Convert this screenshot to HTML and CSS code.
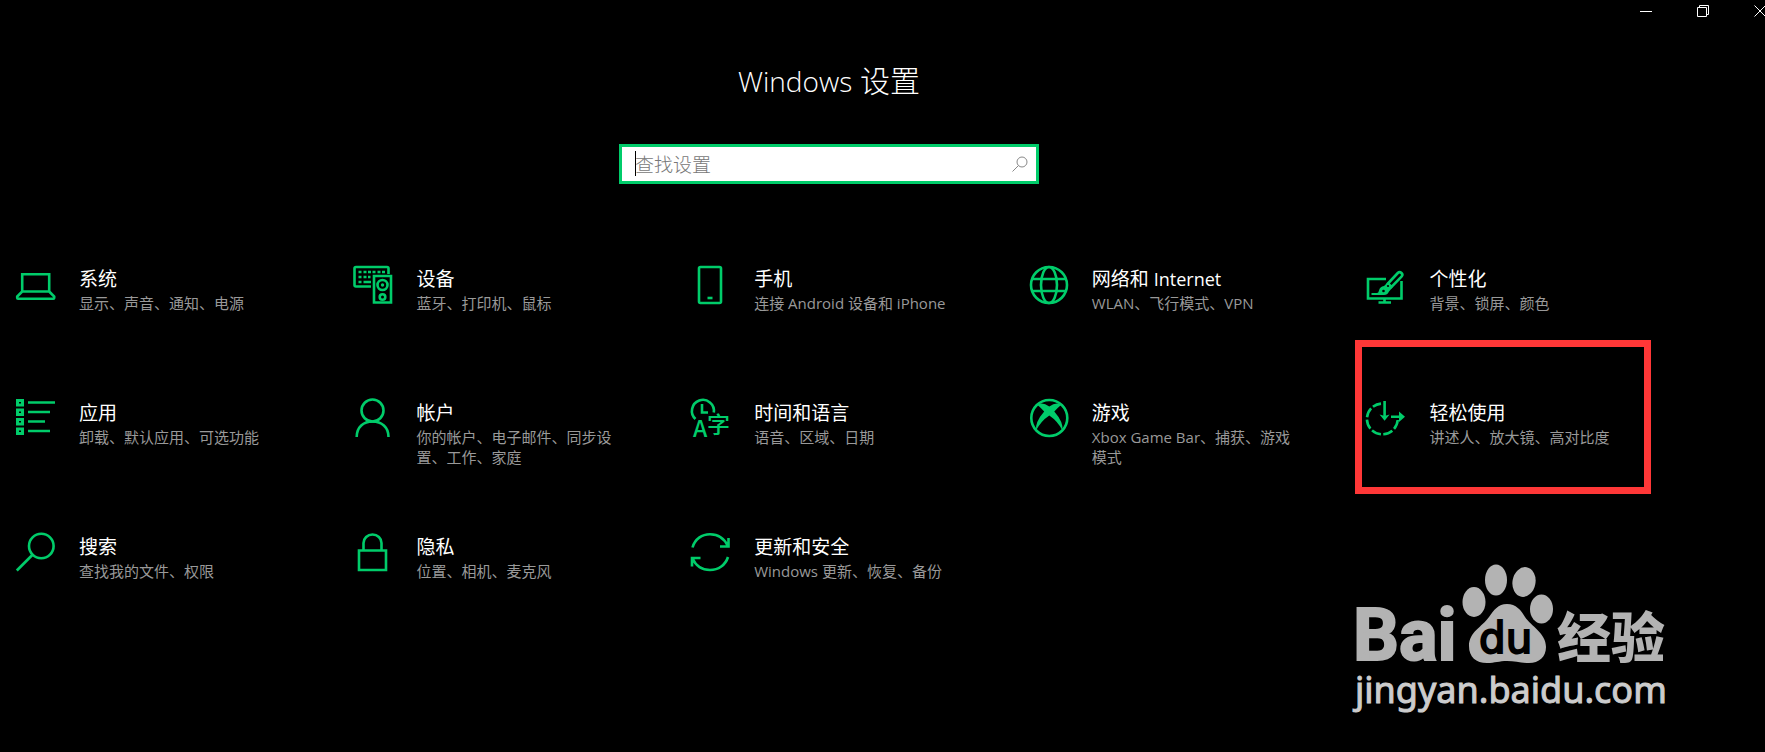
FILE: index.html
```html
<!DOCTYPE html>
<html lang="zh-CN">
<head>
<meta charset="utf-8">
<meta name="viewport" content="width=device-width, initial-scale=1">
<title>Windows 设置</title>
<link rel="stylesheet" href="styles.css">
</head>
<body>
<div class="titlebar">
  <div class="controls">
    <button type="button" class="control" aria-label="最小化"><svg viewBox="0 0 12 12"><path d="M0 6.500h12"/></svg></button>
    <button type="button" class="control" aria-label="还原"><svg viewBox="0 0 12 12"><path d="M.5 2.500h9v9h-9zM2.500 2.500v-2h9v9h-2"/></svg></button>
    <button type="button" class="control" aria-label="关闭"><svg viewBox="0 0 12 12"><path d="M.5.5l11 11M11.500.5l-11 11"/></svg></button>
  </div>
</div>

<main>
  <header class="top">
    <h1><span class="latin">Windows</span> 设置</h1>
    <form class="search" role="search">
      <input type="text" aria-label="查找设置" placeholder="查找设置">
      <span class="caret"></span>
      <button type="button" aria-label="搜索"><svg viewBox="0 0 16 16"><circle cx="10" cy="6" r="5"/><path d="M6.500 9.500L.5 15.500"/></svg></button>
    </form>
  </header>

  <ul class="grid">
    <li><a class="tile" href="#system">
      <svg class="icon" viewBox="0 0 40 40"><path d="M6.200 9.200h27v17.300h-27zM6.200 26.500L1.200 31.500v1.500q0 .8.8.8h35.400q.8 0 .8-.8v-1.500L33.200 26.500"/></svg>
      <span class="text"><span class="name">系统</span><span class="desc">显示、声音、通知、电源</span></span>
    </a></li>
    <li><a class="tile" href="#devices">
      <svg class="icon" viewBox="0 0 40 40"><path d="M17 21.500H2a1.500 1.500 0 0 1-1.500-1.500V3.500A1.500 1.500 0 0 1 2 2h31A1.500 1.500 0 0 1 34.500 3.500V9"/><path d="M20 11h17v26.500H20z"/><circle cx="28.500" cy="20" r="5"/><circle cx="28.500" cy="32" r="2.800"/><path d="M4.500 7h3M9.500 7h3M14 7h3M18.500 7h3M23.500 7h3M28 7h3M4.500 12h3M9.500 12h3M14 12h2.500M4.500 17h3M9.500 17h7.500"/><circle class="fill" cx="28.500" cy="20" r="1.700"/></svg>
      <span class="text"><span class="name">设备</span><span class="desc">蓝牙、打印机、鼠标</span></span>
    </a></li>
    <li><a class="tile" href="#phone">
      <svg class="icon" viewBox="0 0 40 40"><rect x="8" y="2" width="22" height="36" rx="1.500"/><path d="M16.500 33h5"/></svg>
      <span class="text"><span class="name">手机</span><span class="desc">连接 Android 设备和 iPhone</span></span>
    </a></li>
    <li><a class="tile" href="#network">
      <svg class="icon" viewBox="0 0 40 40"><circle cx="20" cy="20" r="18"/><ellipse cx="20" cy="20" rx="8" ry="18"/><path d="M3.500 14h33M3.500 26h33"/></svg>
      <span class="text"><span class="name">网络和 <span class="latin">Internet</span></span><span class="desc">WLAN、飞行模式、VPN</span></span>
    </a></li>
    <li><a class="tile" href="#personalization">
      <svg class="icon" viewBox="0 0 40 40"><path d="M20 14H2v19.500h33.500V16M18.500 34v4M12.500 37.500h12.500"/><path d="M22 18.500L31.800 8a2.500 2.500 0 0 1 3.700 3.600L25.500 22zM19 21.500l4 3.500"/><path class="fill" d="M21.500 17.500l5 5-3.500 4q-1.500 3.500-5 3.500H5.500v-2h5.500q1.500 0 2-2.500 .8-4 5-4.500z"/><circle class="hole" cx="17.500" cy="26" r="1.300"/><circle class="hole" cx="22" cy="21" r="1.100"/></svg>
      <span class="text"><span class="name">个性化</span><span class="desc">背景、锁屏、颜色</span></span>
    </a></li>
    <li><a class="tile" href="#apps">
      <svg class="icon" viewBox="0 0 40 40"><path class="thick" d="M1.500 1.500h5v4.500h-5zM1.500 11h5v4.500h-5zM1.500 20.500h5V25h-5zM1.500 30h5v4.500h-5z"/><path d="M12 3.500h27M12 13h22M12 22.500h17M12 32h22"/></svg>
      <span class="text"><span class="name">应用</span><span class="desc">卸载、默认应用、可选功能</span></span>
    </a></li>
    <li><a class="tile" href="#accounts">
      <svg class="icon" viewBox="0 0 40 40"><circle cx="18.500" cy="11.500" r="11"/><path d="M2.700 38C2.700 28 9.500 22.500 18.500 22.500S34.500 28 34.500 38"/></svg>
      <span class="text"><span class="name">帐户</span><span class="desc">你的帐户、电子邮件、同步设置、工作、家庭</span></span>
    </a></li>
    <li><a class="tile" href="#time">
      <svg class="icon" viewBox="0 0 40 40"><path d="M4.500 20A11 11 0 1 1 22.800 13.500M11 5v8.500h6"/><text class="glyph" x="2" y="38" font-size="23">A</text><text class="glyph" x="16" y="34" font-size="23">字</text></svg>
      <span class="text"><span class="name">时间和语言</span><span class="desc">语音、区域、日期</span></span>
    </a></li>
    <li><a class="tile" href="#gaming">
      <svg class="icon" viewBox="0 0 40 40"><circle cx="20.300" cy="19" r="18"/><path class="fill" d="M8.500 6Q13 2.500 20.300 7.500 27.500 2.500 32 6 29 8.500 25.300 12.500 34.500 23 33.500 31.500 28.500 22 20.300 16.500 12 22 7 31.500 6 23 15.200 12.500 11.500 8.500 8.500 6z"/></svg>
      <span class="text"><span class="name">游戏</span><span class="desc">Xbox Game Bar、捕获、游戏模式</span></span>
    </a></li>
    <li><a class="tile marked" href="#ease">
      <svg class="icon" viewBox="0 0 40 40"><path stroke-dasharray="9.800 2.400" d="M31.700 21A15.400 15.400 0 1 1 15 4.600"/><path d="M18.600 2v16M25 17.700h10"/><path class="fill" d="M13.600 15.500L18.600 17l5-1.500-5 6.300zM33 12.500l6 5.200-6 5.200z"/></svg>
      <span class="text"><span class="name">轻松使用</span><span class="desc">讲述人、放大镜、高对比度</span></span>
    </a></li>
    <li><a class="tile" href="#search">
      <svg class="icon" viewBox="0 0 40 40"><circle cx="25.300" cy="13" r="12.300"/><path d="M16.800 21.500L.8 37.500"/></svg>
      <span class="text"><span class="name">搜索</span><span class="desc">查找我的文件、权限</span></span>
    </a></li>
    <li><a class="tile" href="#privacy">
      <svg class="icon" viewBox="0 0 40 40"><path d="M5 17.500h27V37H5zM9.500 17.500V10a9 8.500 0 0 1 18 0v7.500"/></svg>
      <span class="text"><span class="name">隐私</span><span class="desc">位置、相机、麦克风</span></span>
    </a></li>
    <li><a class="tile" href="#update">
      <svg class="icon" viewBox="0 0 40 40"><path d="M1.500 14.500C4 6 11 1.200 19 1.200c8 0 14.500 4.500 18 12M37.500 5v8.500H29M37 24c-2.500 8-9.500 13-18 13-7.500 0-14-4-17.500-11.500M1 33.500V25h8.500"/></svg>
      <span class="text"><span class="name">更新和安全</span><span class="desc">Windows 更新、恢复、备份</span></span>
    </a></li>
  </ul>
</main>

<div class="watermark">
  <svg viewBox="0 0 320 150" role="img" aria-label="Baidu 经验">
    <text class="bai" x="1" y="97" font-size="72">Bai</text>
    <ellipse cx="122" cy="39" rx="11.500" ry="15"/>
    <ellipse cx="144" cy="17" rx="11" ry="15.500"/>
    <ellipse cx="172" cy="19" rx="11.500" ry="15" transform="rotate(10 172 19)"/>
    <ellipse cx="189.500" cy="46" rx="11.500" ry="14.500"/>
    <path d="M155 41c9 0 14 6 18 13 6 9 21 16 21 30 0 10-7 16-17 16-8 0-14-2-22-2s-12 2-20 2c-11 0-18-6-18-17 0-14 13-19 20-29 5-7 9-13 18-13z"/>
    <text class="du" x="127" y="90" font-size="42">du</text>
    <text class="cjk" x="205" y="95" font-size="54">经验</text>
    <text class="url" x="3" y="140" font-size="36">jingyan.baidu.com</text>
  </svg>
</div>
</body>
</html>
```
FILE: styles.css
```css
*,
*::after {
  box-sizing: border-box;
}

body {
  margin: 0;
  min-height: 100vh;
  position: relative;
  overflow-x: hidden;
  background: #000;
  color: #fff;
  font-family: "Open Sans", "Noto Sans CJK SC", sans-serif;
}

svg {
  display: block;
}

.titlebar {
  overflow: hidden;
}

.controls {
  display: flex;
  justify-content: flex-end;
  margin-right: -23px;
}

.control {
  width: 57px;
  height: 21px;
  padding: 0;
  border: 0;
  background: none;
  display: flex;
  align-items: center;
  justify-content: center;
}

.control svg {
  width: 12px;
  height: 12px;
  fill: none;
  stroke: #fff;
}

.top {
  display: flex;
  flex-direction: column;
  align-items: center;
  gap: 43px;
  padding: 40px 107px 0 0;
}

h1 {
  margin: 0;
  font-size: 30px;
  line-height: 40px;
  font-weight: 300;
}

h1 .latin {
  font-size: 28px;
}

.search {
  position: relative;
  display: flex;
  align-items: center;
  width: 420px;
  max-width: 100%;
  height: 40px;
  padding: 0 8px 0 13px;
  border: 3px solid #00cc6a;
  background: #fff;
}

.search input {
  flex: 1;
  min-width: 0;
  padding: 0;
  border: 0;
  outline: 0;
  background: none;
  font: 19px/24px "Noto Sans CJK SC", sans-serif;
  font-weight: 300;
  color: #000;
}

.search input::placeholder {
  color: #777;
  opacity: 1;
}

.search button {
  padding: 0;
  border: 0;
  background: none;
}

.search button svg {
  width: 16px;
  height: 16px;
  fill: none;
  stroke: #888;
}

.caret {
  position: absolute;
  left: 13px;
  top: 4px;
  width: 1px;
  height: 25px;
  background: #000;
}

.grid {
  display: grid;
  grid-template-columns: repeat(5, minmax(0, 1fr));
  grid-auto-rows: minmax(134px, auto);
  margin: 0;
  padding: 81px 61px 0 16px;
  list-style: none;
}

.tile {
  position: relative;
  display: flex;
  gap: 23px;
  color: inherit;
  text-decoration: none;
}

.icon {
  flex: none;
  width: 40px;
  height: 40px;
  overflow: visible;
  fill: none;
  stroke: #00cc6a;
  stroke-width: 2.6;
}

.icon .thick {
  stroke-width: 3;
}

.icon .fill,
.icon .glyph {
  fill: #00cc6a;
  stroke: none;
}

.icon .hole {
  fill: #000;
  stroke: none;
}

.icon .glyph {
  font-family: "Noto Sans CJK SC", sans-serif;
  font-weight: 500;
}

.text {
  display: flex;
  flex-direction: column;
  max-width: 205px;
}

.name {
  font-size: 19px;
  line-height: 28px;
}

.name .latin {
  font-size: 18px;
}

.desc {
  font-size: 15px;
  line-height: 20px;
  color: #999;
}

.marked::after {
  content: "";
  position: absolute;
  left: -11px;
  top: -59px;
  width: 296px;
  height: 154px;
  border: 7px solid #ff3737;
}

.watermark {
  position: absolute;
  right: 93px;
  bottom: 39px;
  width: 320px;
}

.watermark svg {
  width: 100%;
  overflow: visible;
  fill: #b3b3b3;
}

.watermark .bai {
  font-family: Roboto, sans-serif;
  font-weight: 700;
  stroke: #b3b3b3;
  stroke-width: 2;
}

.watermark .du {
  font-family: "DejaVu Sans", sans-serif;
  fill: #000;
  stroke: #000;
  stroke-width: 2;
}

.watermark .cjk {
  font-family: "Noto Sans CJK SC", sans-serif;
  font-weight: 900;
}

.watermark .url {
  font-family: "Noto Sans", sans-serif;
  fill: #ccc;
  stroke: #ccc;
  stroke-width: 1;
}
```
